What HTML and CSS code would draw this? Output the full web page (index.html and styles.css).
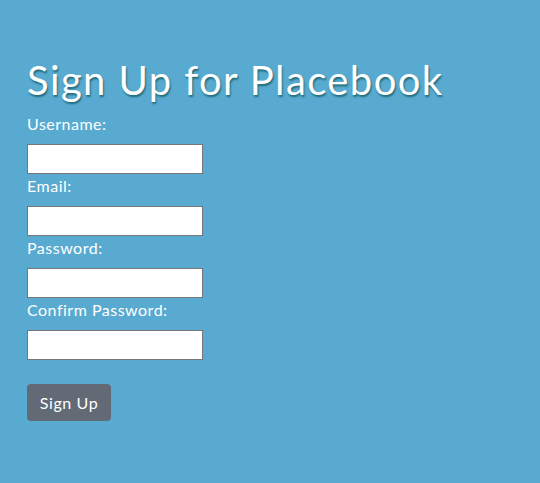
FILE: index.html
```html
<!DOCTYPE html>
<html>
<head>
<meta charset="utf-8">
<link rel="stylesheet" href="styles.css">
</head>
<body>
<main class="page">
  <h1 class="title">Sign Up for Placebook</h1>
  <form class="form">
    <label class="label" for="u">Username:</label>
    <input class="input" id="u" type="text">
    <label class="label" for="e">Email:</label>
    <input class="input" id="e" type="email">
    <label class="label" for="p">Password:</label>
    <input class="input" id="p" type="password">
    <label class="label" for="c">Confirm Password:</label>
    <input class="input" id="c" type="password">
    <button class="btn" type="button">Sign Up</button>
  </form>
</main>
</body>
</html>
```
FILE: styles.css
```css
html, body {
  margin: 0;
  padding: 0;
  background: #59aad0;
  height: 100%;
}
.page {
  padding: 56px 27px 0 27px;
  font-family: Lato, "Noto Sans", sans-serif;
  color: #fff;
}
.title {
  margin: 0 0 8px 0;
  font-weight: 400;
  font-size: 40px;
  line-height: 48px;
  letter-spacing: 1.4px;
  text-shadow: 1px 2px 2px #1f6a78;
}
.form {
  display: flex;
  flex-direction: column;
  align-items: flex-start;
}
.label {
  display: block;
  font-size: 16px;
  line-height: 24px;
  letter-spacing: 0.5px;
  margin-bottom: 8px;
}
.input {
  box-sizing: border-box;
  width: 176px;
  height: 30px;
  margin: 0;
  border: 1px solid #767676;
  background: #fff;
  padding: 2px 4px;
}
.btn {
  margin-top: 24px;
  width: 84px;
  height: 37px;
  border: none;
  border-radius: 4px;
  background: #626a75;
  color: #fff;
  font-family: Lato, "Noto Sans", sans-serif;
  font-size: 16px;
  letter-spacing: 0.6px;
  padding: 0;
}
```
